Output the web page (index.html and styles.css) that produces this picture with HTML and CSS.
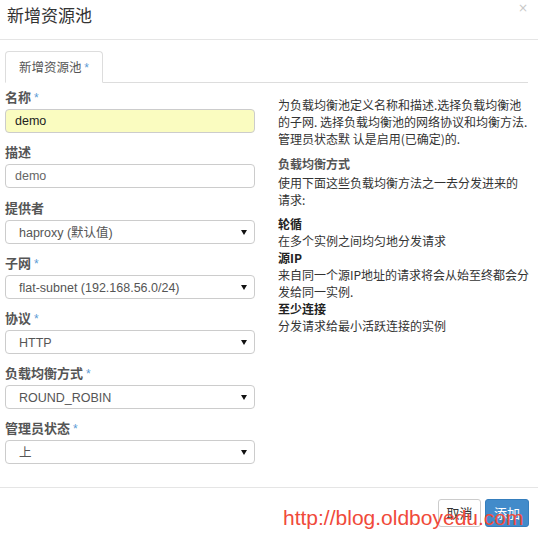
FILE: index.html
```html
<!DOCTYPE html>
<html lang="zh">
<head>
<meta charset="utf-8">
<link rel="stylesheet" href="styles.css">
</head>
<body>
<div class="modal">
  <div class="modal-header">
    <h3 class="title">新增资源池</h3>
    <span class="close">×</span>
  </div>
  <div class="modal-body">
    <div class="tabs">
      <div class="tab">新增资源池 <span class="req">*</span></div>
    </div>
    <div class="content">
      <div class="left">
        <div class="group">
          <label class="lbl">名称 <span class="req">*</span></label>
          <div class="input filled">demo</div>
        </div>
        <div class="group">
          <label class="lbl">描述</label>
          <div class="input plain">demo</div>
        </div>
        <div class="group">
          <label class="lbl">提供者</label>
          <div class="select">haproxy (默认值)</div>
        </div>
        <div class="group">
          <label class="lbl">子网 <span class="req">*</span></label>
          <div class="select">flat-subnet (192.168.56.0/24)</div>
        </div>
        <div class="group">
          <label class="lbl">协议 <span class="req">*</span></label>
          <div class="select">HTTP</div>
        </div>
        <div class="group">
          <label class="lbl">负载均衡方式 <span class="req">*</span></label>
          <div class="select">ROUND_ROBIN</div>
        </div>
        <div class="group">
          <label class="lbl">管理员状态 <span class="req">*</span></label>
          <div class="select">上</div>
        </div>
      </div>
      <div class="right">
        <p class="para">为负载均衡池定义名称和描述.选择负载均衡池<br>的子网. 选择负载均衡池的网络协议和均衡方法.<br>管理员状态默 认是启用(已确定)的.</p>
        <h4 class="sub">负载均衡方式</h4>
        <p class="para">使用下面这些负载均衡方法之一去分发进来的<br>请求:</p>
        <dl class="defs">
          <dt>轮循</dt>
          <dd>在多个实例之间均匀地分发请求</dd>
          <dt>源IP</dt>
          <dd>来自同一个源IP地址的请求将会从始至终都会分<br>发给同一实例.</dd>
          <dt>至少连接</dt>
          <dd>分发请求给最小活跃连接的实例</dd>
        </dl>
      </div>
    </div>
  </div>
  <div class="modal-footer">
    <button class="btn btn-default">取消</button>
    <button class="btn btn-primary">添加</button>
    <span class="watermark">http://blog.oldboyedu.com</span>
  </div>
</div>
</body>
</html>
```

FILE: styles.css
```css
* { box-sizing: border-box; }
html, body { margin: 0; padding: 0; background: #fff; }
body {
  font-family: "Liberation Sans", "Noto Sans CJK SC", sans-serif;
  font-size: 13px;
  color: #333;
  width: 538px;
  height: 537px;
  overflow: hidden;
}
.modal { position: relative; width: 538px; }
.modal-header {
  height: 40px;
  border-bottom: 1px solid #e5e5e5;
  display: flex;
  align-items: flex-start;
  justify-content: space-between;
  padding: 0 10px 0 7px;
}
.title {
  margin: 4px 0 0 0;
  font-size: 17px;
  font-weight: normal;
  line-height: 22px;
  color: #333;
  font-family: "Noto Sans CJK SC", sans-serif;
}
.close {
  font-size: 12px;
  line-height: 12px;
  color: #c8c8c8;
  margin-top: 2px;
  font-family: "DejaVu Sans", sans-serif;
}
.modal-body { padding: 11px 10px 13px 5px; }
.tabs {
  border-bottom: 1px solid #ddd;
  height: 32px;
  display: flex;
}
.tab {
  width: 98px;
  height: 32px;
  border: 1px solid #ddd;
  border-bottom-color: #fff;
  border-radius: 4px 4px 0 0;
  background: #fff;
  text-align: center;
  line-height: 30px;
  font-size: 12.5px;
  color: #555;
  font-family: "Noto Sans CJK SC", sans-serif;
}
.req {
  color: #5b9bd5;
  font-family: "Liberation Sans", sans-serif;
  font-size: 12px;
  line-height: 0;
  font-weight: normal;
}
.content { display: flex; padding-top: 5px; }
.left { width: 250px; flex: none; }
.right { margin-left: 23px; width: 255px; padding-top: 8px; }
.group { margin-bottom: 10px; }
.group:nth-child(2) { margin-bottom: 11px; }
.lbl {
  display: block;
  height: 18px;
  font-weight: bold;
  font-size: 13px;
  line-height: 18px;
  margin-bottom: 3px;
  color: #555;
  font-family: "Noto Sans CJK SC", sans-serif;
  overflow: visible;
}
.input, .select {
  height: 24px;
  border: 1px solid #ccc;
  border-radius: 4px;
  line-height: 22px;
  font-size: 12.5px;
  font-family: "Liberation Sans", "Noto Sans CJK SC", sans-serif;
  white-space: nowrap;
  overflow: hidden;
}
.input { padding-left: 9px; }
.input.filled { background: #fafcc0; color: #222; }
.input.plain { background: #fff; color: #666; }
.select {
  position: relative;
  padding-left: 13px;
  padding-top: 1px;
  color: #555;
  background: #fff;
}
.select::after {
  content: "";
  position: absolute;
  right: 7px;
  top: 9px;
  width: 0;
  height: 0;
  border-left: 3px solid transparent;
  border-right: 3px solid transparent;
  border-top: 5px solid #111;
}
.para {
  margin: 0;
  font-size: 12px;
  line-height: 17px;
  color: #333;
  font-family: "Noto Sans CJK SC", sans-serif;
  white-space: nowrap;
}
.sub {
  margin: 8px 0 2px 0;
  font-size: 12px;
  line-height: 17px;
  font-weight: bold;
  color: #555;
  font-family: "Noto Sans CJK SC", sans-serif;
}
.defs {
  margin: 7px 0 0 0;
  font-size: 12px;
  line-height: 17px;
  font-family: "Noto Sans CJK SC", sans-serif;
  white-space: nowrap;
}
.defs dt { font-weight: bold; color: #222; line-height: 17px; }
.defs dd { margin: 0; color: #333; }
.modal-footer {
  position: relative;
  border-top: 1px solid #e5e5e5;
  display: flex;
  justify-content: flex-end;
  gap: 4px;
  padding: 11px 9px 0 0;
}
.btn {
  height: 28px;
  padding: 0;
  border-radius: 3px;
  font-size: 13px;
  font-family: "Noto Sans CJK SC", sans-serif;
  line-height: 26px;
  border: 1px solid #ccc;
  white-space: nowrap;
  text-align: center;
}
.btn-default { width: 43px; background: #fff; color: #333; }
.btn-primary { width: 44px; background: #428bca; border-color: #357ebd; color: #fff; }
.watermark {
  position: absolute;
  left: 283px;
  top: 18px;
  font-size: 21px;
  line-height: 24px;
  color: #f04a3a;
  font-family: "Liberation Sans", sans-serif;
}
```
